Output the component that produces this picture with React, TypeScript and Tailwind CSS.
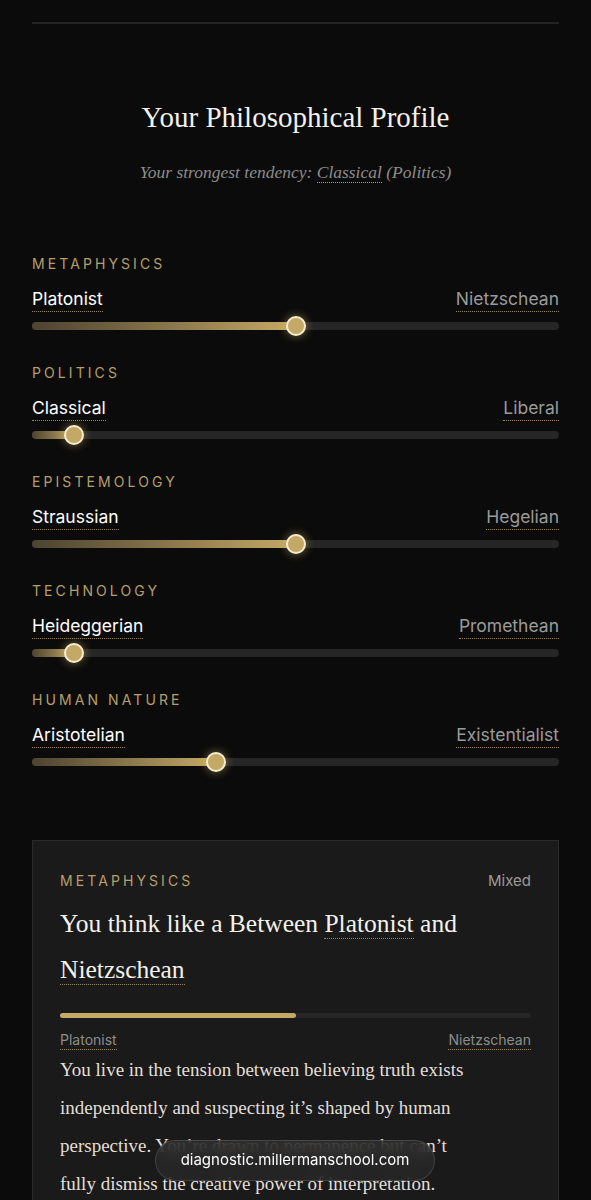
import React from 'react';

type Axis = {
  name: string;
  left: string;
  right: string;
  value: number;
};

const axes: Axis[] = [
  { name: 'Metaphysics', left: 'Platonist', right: 'Nietzschean', value: 50 },
  { name: 'Politics', left: 'Classical', right: 'Liberal', value: 8 },
  { name: 'Epistemology', left: 'Straussian', right: 'Hegelian', value: 50 },
  { name: 'Technology', left: 'Heideggerian', right: 'Promethean', value: 8 },
  { name: 'Human Nature', left: 'Aristotelian', right: 'Existentialist', value: 35 },
];

const serif = "font-['Liberation_Serif',serif]";
const sans = "font-['Inter',sans-serif]";

const AxisRow: React.FC<{ axis: Axis }> = ({ axis }) => (
  <div className="flex flex-col">
    <div className={`${sans} text-[14px] uppercase tracking-[0.22em] text-[#b59f6a] leading-5`}>
      {axis.name}
    </div>
    <div className={`${sans} mt-[15px] flex items-end justify-between text-[17.5px] leading-5`}>
      <span className="border-b border-dotted border-[#9a8550] pb-[2px] text-white">{axis.left}</span>
      <span className="border-b border-dotted border-[#9a8550] pb-[2px] text-[#9a9a9a]">{axis.right}</span>
    </div>
    <div className="relative mt-[10px] h-2 rounded-full bg-[#262626]">
      <div
        className="h-full rounded-full bg-gradient-to-r from-[#4d4330] to-[#c7aa66]"
        style={{ width: `${axis.value}%` }}
      />
      <div
        className="absolute top-1/2 h-[20px] w-[20px] -translate-x-1/2 -translate-y-1/2 rounded-full border-2 border-[#f6ecd0] bg-[#c4a865] shadow-[0_0_10px_rgba(214,184,110,0.55)]"
        style={{ left: `${axis.value}%` }}
      />
    </div>
  </div>
);

export default function App() {
  return (
    <div className="min-h-screen bg-[#0b0b0b] px-8">
      <div className="pt-[22px]">
        <div className="h-[2px] bg-[#232323]" />
      </div>

      <div className="mt-[73px] text-center">
        <h1 className={`${serif} text-[29px] leading-10 text-[#f4f1ea]`}>Your Philosophical Profile</h1>
        <p className={`${serif} mt-[21px] text-[17.5px] italic leading-7 text-[#8c8c8c]`}>
          Your strongest tendency:{' '}
          <span className="border-b border-dotted border-[#b59f6a]">Classical</span> (Politics)
        </p>
      </div>

      <div className="mt-[68px] flex flex-col gap-[33px]">
        {axes.map(a => (
          <AxisRow key={a.name} axis={a} />
        ))}
      </div>

      <div className="relative mt-[74px] border border-[#2a2a2a] bg-[#1a1a1a] px-[27px] pt-[30px] pb-10">
        <div className={`${sans} flex items-center justify-between leading-5`}>
          <span className="text-[14px] uppercase tracking-[0.22em] text-[#b59f6a]">Metaphysics</span>
          <span className="text-[15px] text-[#9a9a9a]">Mixed</span>
        </div>
        <h2 className={`${serif} mt-[10px] text-[25.5px] leading-[46px] text-[#f4f1ea]`}>
          You think like a Between{' '}
          <span className="border-b border-dotted border-[#9a8550]">Platonist</span> and{' '}
          <span className="border-b border-dotted border-[#9a8550]">Nietzschean</span>
        </h2>
        <div className="mt-[20px] h-[5px] rounded-full bg-[#262626]">
          <div className="h-full w-1/2 rounded-full bg-[#c4a865]" />
        </div>
        <div className={`${sans} mt-[14px] flex justify-between text-[14px] leading-4 text-[#8c8c8c]`}>
          <span className="border-b border-dotted border-[#9a8550] pb-[1px]">Platonist</span>
          <span className="border-b border-dotted border-[#9a8550] pb-[1px]">Nietzschean</span>
        </div>
        <p className={`${serif} mt-[1px] text-[19px] leading-[38px] text-[#e2dfd8]`}>
          You live in the tension between believing truth exists independently and suspecting it’s
          shaped by human perspective. You’re drawn to permanence but can’t
          <br />
          fully dismiss the creative power of interpretation.
        </p>
      </div>

      <div className="fixed left-[155px] top-[1140px] flex h-[41px] w-[280px] items-center justify-center rounded-full border border-[#ffffff22] bg-[#2a2a2a]/70 backdrop-blur-sm">
        <span className={`${sans} text-[15px] text-white`}>diagnostic.millermanschool.com</span>
      </div>
    </div>
  );
}
